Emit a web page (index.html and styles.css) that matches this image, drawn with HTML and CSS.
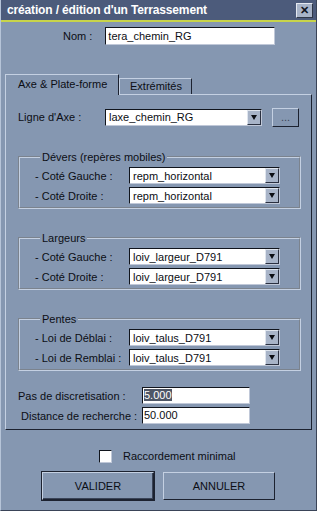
FILE: index.html
```html
<!DOCTYPE html>
<html lang="fr">
<head>
  <meta charset="UTF-8" />
  <title>création / édition d'un Terrassement</title>
  <link rel="stylesheet" href="styles.css">
</head>
<body>
  <div class="window">
    <div class="titlebar">
      <span class="title">création / édition d'un Terrassement</span>
      <button class="close-btn">&#10005;</button>
    </div>

    <div class="name-row">
      <label class="name-label">Nom :</label>
      <input class="textbox name-input" value="tera_chemin_RG">
    </div>

    <div class="tabs">
      <div class="tab active">Axe &amp; Plate-forme</div>
      <div class="tab">Extrémités</div>
    </div>

    <div class="panel">
      <div class="axis-row">
        <label class="axis-label">Ligne d'Axe :</label>
        <div class="combo axis-combo"><span class="combo-text">laxe_chemin_RG</span><span class="combo-arrow"></span></div>
        <button class="small-btn">...</button>
      </div>

      <fieldset class="group">
        <legend>Dévers (repères mobiles)</legend>
        <div class="field-row">
          <label>- Coté Gauche :</label>
          <div class="combo"><span class="combo-text">repm_horizontal</span><span class="combo-arrow"></span></div>
        </div>
        <div class="field-row">
          <label>- Coté Droite :</label>
          <div class="combo"><span class="combo-text">repm_horizontal</span><span class="combo-arrow"></span></div>
        </div>
      </fieldset>

      <fieldset class="group">
        <legend>Largeurs</legend>
        <div class="field-row">
          <label>- Coté Gauche :</label>
          <div class="combo"><span class="combo-text">loiv_largeur_D791</span><span class="combo-arrow"></span></div>
        </div>
        <div class="field-row">
          <label>- Coté Droite :</label>
          <div class="combo"><span class="combo-text">loiv_largeur_D791</span><span class="combo-arrow"></span></div>
        </div>
      </fieldset>

      <fieldset class="group">
        <legend>Pentes</legend>
        <div class="field-row">
          <label>- Loi de Déblai :</label>
          <div class="combo"><span class="combo-text">loiv_talus_D791</span><span class="combo-arrow"></span></div>
        </div>
        <div class="field-row">
          <label>- Loi de Remblai :</label>
          <div class="combo"><span class="combo-text">loiv_talus_D791</span><span class="combo-arrow"></span></div>
        </div>
      </fieldset>

      <div class="param-row">
        <label class="param-label">Pas de discretisation :</label>
        <div class="textbox param-input"><span class="selected">5.000</span></div>
      </div>
      <div class="param-row">
        <label class="param-label indent">Distance de recherche :</label>
        <div class="textbox param-input">50.000</div>
      </div>
    </div>

    <div class="check-row">
      <span class="checkbox"></span>
      <span>Raccordement minimal</span>
    </div>

    <div class="button-row">
      <button class="command-button default">VALIDER</button>
      <button class="command-button">ANNULER</button>
    </div>
  </div>
</body>
</html>
```

FILE: styles.css
```css
body {
  margin: 0;
  font-family: "Liberation Sans", Arial, sans-serif;
  font-size: 11px;
  color: #0c0e14;
}

label {
  white-space: nowrap;
}

.window {
  width: 317px;
  height: 511px;
  box-sizing: border-box;
  background: #8597b1;
  border-left: 1px solid #b6c4d8;
  border-right: 1px solid #3a4458;
  border-bottom: 1px solid #3a4458;
  overflow: hidden;
}

.titlebar {
  height: 20px;
  background: #4c5b7b;
  border-bottom: 2px solid #c8d44a;
  display: flex;
  align-items: center;
  justify-content: space-between;
  padding: 0 3px 0 6px;
}

.title {
  color: white;
  font-weight: bold;
  font-size: 12px;
  letter-spacing: -0.15px;
}

.close-btn {
  width: 17px;
  height: 15px;
  padding: 0;
  border: 1px solid;
  border-color: #e4e8f0 #303848 #303848 #e4e8f0;
  background: #a8b4c8;
  color: #101420;
  font-size: 11px;
  font-weight: bold;
  line-height: 12px;
}

.name-row {
  display: flex;
  align-items: center;
  margin-top: 5px;
  height: 18px;
}

.name-label {
  margin-left: 62px;
}

.textbox {
  box-sizing: border-box;
  height: 18px;
  background: white;
  border: 1px solid;
  border-color: #10141c #c0c8d8 #c0c8d8 #10141c;
  font-family: inherit;
  font-size: 11px;
  padding: 0 2px;
  color: #0c0e14;
  outline: none;
}

.name-input {
  margin-left: 13px;
  width: 170px;
}

.tabs {
  display: flex;
  align-items: flex-end;
  margin: 29px 0 0 4px;
  height: 20px;
}

.tab {
  box-sizing: border-box;
  width: 73px;
  height: 16px;
  padding: 0 0 0 10px;
  border: 1px solid;
  border-color: #c4d0e2 #1c2230 transparent #c4d0e2;
  border-bottom: none;
  line-height: 14px;
  white-space: nowrap;
}

.tab.active {
  width: 114px;
  padding-left: 12px;
  line-height: 18px;
  z-index: 1;
  background: #8597b1;
  margin-bottom: -1px;
  height: 21px;
  position: relative;
}

.panel {
  box-sizing: border-box;
  margin: 0 4px 0 4px;
  height: 336px;
  border: 1px solid;
  border-color: #c4d0e2 #1c2230 #1c2230 #c4d0e2;
  padding: 13px 11px 0 12px;
}

.axis-row {
  display: flex;
  align-items: center;
  height: 18px;
}

.axis-label {
  width: 87px;
}

.combo {
  box-sizing: border-box;
  width: 151px;
  height: 17px;
  background: white;
  border: 1px solid;
  border-color: #10141c #c0c8d8 #c0c8d8 #10141c;
  display: flex;
  align-items: center;
}

.axis-combo {
  width: 157px;
}

.combo-text {
  flex: 1;
  padding-left: 3px;
  white-space: nowrap;
  overflow: hidden;
}

.combo-arrow {
  box-sizing: border-box;
  width: 14px;
  height: 15px;
  background: #a8b4c8;
  border: 1px solid;
  border-color: #dfe5ee #2a3040 #2a3040 #dfe5ee;
  position: relative;
}

.combo-arrow::after {
  content: "";
  position: absolute;
  left: 3px;
  top: 4px;
  border-left: 3px solid transparent;
  border-right: 3px solid transparent;
  border-top: 5px solid #0c0e14;
}

.small-btn {
  margin-left: 10px;
  width: 27px;
  height: 19px;
  padding: 0;
  border: 1px solid;
  border-color: #c4d0e2 #1c2230 #1c2230 #c4d0e2;
  background: #8597b1;
  font-family: inherit;
  font-size: 11px;
  color: #3c4658;
}

.group {
  margin: 25px 0 0 0;
  width: 283px;
  height: 58px;
  box-sizing: border-box;
  border: 2px groove #c4d0e2;
  padding: 4px 0 0 15px;
  display: flex;
  flex-direction: column;
  gap: 3px;
}

.group + .group {
  margin-top: 23px;
}

.group legend {
  padding: 0 2px;
  margin-left: 5px;
}

.field-row {
  display: flex;
  align-items: center;
  height: 17px;
}

.field-row label {
  width: 94px;
}

.param-row {
  display: flex;
  align-items: center;
  height: 17px;
  margin-top: 16px;
}

.param-row + .param-row {
  margin-top: 3px;
}

.param-label {
  width: 124px;
}

.param-label.indent {
  padding-left: 3px;
  width: 121px;
}

.param-input {
  width: 108px;
  height: 17px;
  line-height: 15px;
  padding: 0 1px;
}

.selected {
  background: #4e5666;
  color: white;
}

.check-row {
  display: flex;
  align-items: center;
  gap: 11px;
  margin: 19px 0 0 98px;
  height: 14px;
}

.checkbox {
  box-sizing: border-box;
  width: 13px;
  height: 13px;
  background: white;
  border: 1px solid;
  border-color: #10141c #c0c8d8 #c0c8d8 #10141c;
}

.button-row {
  display: flex;
  gap: 9px;
  margin: 9px 0 0 41px;
}

.command-button {
  box-sizing: border-box;
  width: 112px;
  height: 28px;
  padding: 0;
  border: 1px solid;
  border-color: #c4d0e2 #1c2230 #1c2230 #c4d0e2;
  background: #8597b1;
  font-family: inherit;
  font-size: 11px;
  color: #0c0e14;
}

.command-button.default {
  outline: 1px solid #1c2230;
  box-shadow: inset -1px -1px 0 #3a4458;
}
```
